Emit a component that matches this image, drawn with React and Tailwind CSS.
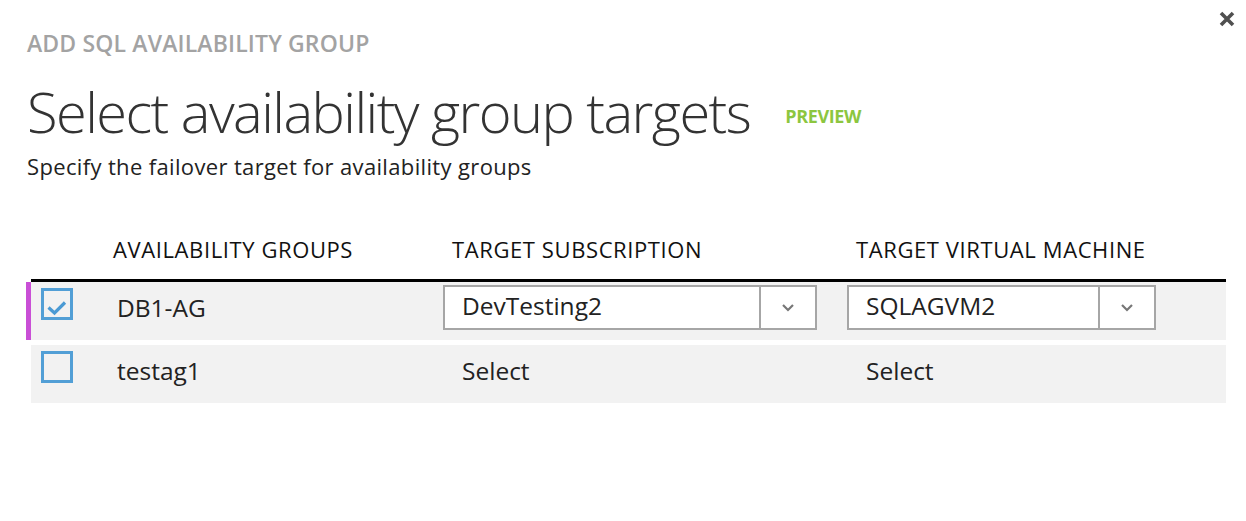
import React from 'react';

const font = { fontFamily: '"Open Sans", "Noto Sans", sans-serif' };

const Checkbox = ({ checked }) => (
  <div className="w-[32px] h-[32px] border-[3px] border-[#529fd6]">
    {checked && (
      <svg width="26" height="26" viewBox="0 0 26 26">
        <path d="M4.5 16.5 L10.5 22 L21 11.5" fill="none" stroke="#4a9ad4" strokeWidth="3.2" />
      </svg>
    )}
  </div>
);

const Dropdown = ({ value }) => (
  <div className="h-[45px] border-2 border-[#a6a6a6] bg-white flex">
    <div className="flex-1 flex items-center pl-[17px] pb-[2px] text-[24.5px] text-[#222]">{value}</div>
    <div className="w-[56px] border-l-2 border-[#a6a6a6] flex items-center justify-center">
      <svg width="14" height="9" viewBox="0 0 14 9">
        <path d="M2 2 L7 7 L12 2" fill="none" stroke="#777" strokeWidth="2.2" />
      </svg>
    </div>
  </div>
);

const App = () => {
  return (
    <div className="relative w-full h-[521px] bg-white text-[#222]" style={font}>
      <button className="absolute right-[11px] top-[11px] w-[16px] h-[16px]">
        <svg width="16" height="16" viewBox="0 0 16 16">
          <path d="M2 2 L14 14 M14 2 L2 14" stroke="#505050" strokeWidth="3.6" />
        </svg>
      </button>

      <div className="pl-[27px]">
        <div className="pt-[29px] text-[23px] leading-[28px] font-semibold text-[#a3a3a3] tracking-[0.15px]">
          ADD SQL AVAILABILITY GROUP
        </div>
        <div className="flex items-start mt-[18px]">
          <h1 className="text-[56px] leading-[72px] font-light text-[#333] tracking-[-1.55px]">
            Select availability group targets
          </h1>
          <span className="ml-[35px] mt-[29px] text-[18px] leading-[24px] font-bold text-[#8cc63f] tracking-[-0.4px]">
            PREVIEW
          </span>
        </div>
        <p className="text-[22px] leading-[28px] text-[#222] mt-[5px] tracking-[0.35px]">
          Specify the failover target for availability groups
        </p>
      </div>

      <div className="ml-[31px] mr-[20px] mt-[55px]">
        <div className="grid grid-cols-[86px_326px_404px_1fr] text-[22px] leading-[28px] text-[#111] tracking-[0.6px] pb-[16px]">
          <div />
          <div className="ml-[-4px]">AVAILABILITY GROUPS</div>
          <div className="pl-[9px]">TARGET SUBSCRIPTION</div>
          <div className="pl-[9px]">TARGET VIRTUAL MACHINE</div>
        </div>
        <div className="h-[3px] bg-black" />

        <div className="relative grid grid-cols-[86px_326px_404px_1fr] items-center h-[58px] bg-[#f2f2f2]">
          <div className="absolute left-[-5px] top-0 bottom-0 w-[5px] bg-[#c94fd6]" />
          <div className="pl-[10px] self-start pt-[6px]"><Checkbox checked /></div>
          <div className="text-[24.5px] mb-[5px]">DB1-AG</div>
          <div className="w-[374px] self-start mt-[3px]"><Dropdown value="DevTesting2" /></div>
          <div className="w-[309px] self-start mt-[3px]"><Dropdown value="SQLAGVM2" /></div>
        </div>

        <div className="grid grid-cols-[86px_326px_404px_1fr] items-center h-[58px] bg-[#f2f2f2] mt-[5px]">
          <div className="pl-[10px] self-start pt-[6px]"><Checkbox /></div>
          <div className="text-[24.5px] mb-[5px]">testag1</div>
          <div className="pl-[19px] text-[24.5px] mb-[5px]">Select</div>
          <div className="pl-[19px] text-[24.5px] mb-[5px]">Select</div>
        </div>
      </div>
    </div>
  );
};

export default App;
